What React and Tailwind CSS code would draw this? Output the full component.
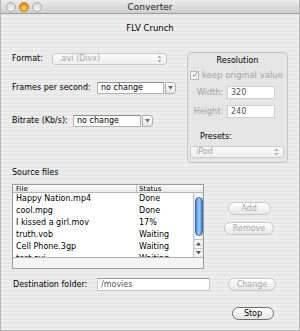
import React from 'react';

const Stepper = ({ color = '#9a9a9a' }) => (
  <svg width="5" height="8" viewBox="0 0 5 8">
    <path d="M2.5 0.5 L4.5 3 L0.5 3 Z" fill={color} />
    <path d="M2.5 7.5 L4.5 5 L0.5 5 Z" fill={color} />
  </svg>
);

const DownArrow = () => (
  <svg width="5" height="4" viewBox="0 0 5 4">
    <path d="M0 0 L5 0 L2.5 3.5 Z" fill="#6a6a6a" />
  </svg>
);

const PillButton = ({ label, disabled, className = '' }) => (
  <div
    className={`h-[13px] flex items-center justify-center rounded-full border bg-gradient-to-b from-white to-[#e6e6e6] ${
      disabled ? 'border-[#c6c6c6] text-[#a8a8a8]' : 'border-[#6f6f6f] text-black'
    } ${className}`}
  >
    {label}
  </div>
);

const Combo = ({ value, className = '' }) => (
  <div className={`flex h-[12px] ${className}`}>
    <div className="flex-1 bg-white border border-[#b4b4b4] border-t-[#8e8e8e] pl-[3px] flex items-center">
      {value}
    </div>
    <div className="w-[11px] ml-[1px] rounded-r-[3px] border border-[#b0b0b0] bg-gradient-to-b from-white to-[#e4e4e4] flex items-center justify-center">
      <DownArrow />
    </div>
  </div>
);

const files = [
  ['Happy Nation.mp4', 'Done'],
  ['cool.mpg', 'Done'],
  ['I kissed a girl.mov', '17%'],
  ['truth.vob', 'Waiting'],
  ['Cell Phone.3gp', 'Waiting'],
  ['test.avi', 'Waiting'],
];

export default function App() {
  return (
    <div className="w-[300px] h-[331px] overflow-hidden flex flex-col text-[8px] leading-[10px] text-black font-['DejaVu_Sans',sans-serif] bg-[repeating-linear-gradient(0deg,#ededed_0px,#ededed_2px,#e7e7e7_2px,#e7e7e7_4px)] border-x border-b border-[#b5b5b5]">
      {/* title bar */}
      <div className="h-[14px] shrink-0 flex items-center bg-gradient-to-b from-[#ececec] to-[#cdcdcd] border-b border-[#9c9c9c]">
        <div className="w-[45px] flex items-center gap-[3px] pl-[5px]">
          <div className="w-[10px] h-[10px] rounded-full border border-[#a9a9a9] bg-gradient-to-b from-[#d8d8d8] to-[#f4f4f4]" />
          <div className="w-[10px] h-[10px] rounded-full border border-[#c7791a] bg-[radial-gradient(circle_at_50%_70%,#ffd35a_0%,#f5a623_50%,#c96a10_100%)]" />
          <div className="w-[10px] h-[10px] rounded-full border border-[#a9a9a9] bg-gradient-to-b from-[#d8d8d8] to-[#f4f4f4]" />
        </div>
        <div className="flex-1 text-center text-[9px] text-[#222]">Converter</div>
        <div className="w-[45px]" />
      </div>

      <div className="mt-[9px] h-[10px] text-center text-[8.5px]">FLV Crunch</div>

      {/* top section */}
      <div className="mt-[19px] flex">
        <div className="w-[186px] pl-[11px] flex flex-col">
          <div className="mt-[1px] h-[12px] flex items-center">
            <span className="w-[40px]">Format:</span>
            <div className="w-[115px] h-[12px] rounded-[3px] border border-[#c8c8c8] bg-gradient-to-b from-[#fbfbfb] to-[#efefef] flex items-center pl-[6px] pr-[4px] text-[#a3a3a3]">
              <span className="flex-1">.avi (Divx)</span>
              <Stepper color="#a8a8a8" />
            </div>
          </div>
          <div className="mt-[17px] h-[12px] flex items-center">
            <span className="w-[85px]">Frames per second:</span>
            <Combo value="no change" className="w-[79px]" />
          </div>
          <div className="mt-[21px] h-[12px] flex items-center">
            <span className="w-[61px]">Bitrate (Kb/s):</span>
            <Combo value="no change" className="w-[80px]" />
          </div>
        </div>

        <div className="w-[101px] h-[111px] rounded-[4px] border border-[#c3c3c3] bg-[#e3e3e3]/70 flex flex-col px-[2px]">
          <div className="mt-[3px] h-[10px] text-center">Resolution</div>
          <div className="mt-[4px] h-[10px] flex items-center text-[#a2a2a2] text-[8.5px]">
            <div className="w-[9px] h-[9px] border border-[#b9b9b9] bg-[#f5f5f5] flex items-center justify-center">
              <svg width="9" height="9" viewBox="0 0 9 9" className="-mt-[2px] ml-[1px]">
                <path d="M1.5 4.5 L3.5 7.5 L8 0.5" stroke="#8a8a8a" strokeWidth="1.4" fill="none" />
              </svg>
            </div>
            <span className="ml-[3px]">keep original value</span>
          </div>
          <div className="mt-[6px] h-[13px] flex items-center text-[#a2a2a2]">
            <span className="w-[33px] text-right">Width:</span>
            <div className="ml-[4px] w-[48px] h-[13px] bg-white border border-[#cfcfcf] pl-[3px] flex items-center text-[#555]">320</div>
          </div>
          <div className="mt-[6px] h-[13px] flex items-center text-[#a2a2a2]">
            <span className="w-[33px] text-right">Height:</span>
            <div className="ml-[4px] w-[48px] h-[13px] bg-white border border-[#cfcfcf] pl-[3px] flex items-center text-[#555]">240</div>
          </div>
          <div className="mt-[14px] h-[10px] pl-[10px]">Presets:</div>
          <div className="mt-[4px] w-[94px] h-[12px] rounded-[3px] border border-[#cacaca] bg-gradient-to-b from-[#fbfbfb] to-[#eeeeee] flex items-center pl-[5px] pr-[4px] text-[#a3a3a3]">
            <span className="flex-1">iPod</span>
            <Stepper color="#a8a8a8" />
          </div>
        </div>
      </div>

      {/* source files */}
      <div className="mt-[5px] h-[10px] pl-[11px]">Source files</div>
      <div className="mt-[6px] flex">
        <div className="ml-[11px] w-[192px] h-[85px] border border-[#9a9a9a] bg-white flex flex-col">
          <div className="h-[8px] flex text-[7px] leading-[8px] bg-gradient-to-b from-white to-[#e9e9e9] border-b border-[#b6b6b6]">
            <div className="w-[124px] pl-[3px] border-r border-[#c2c2c2]">File</div>
            <div className="flex-1 pl-[2px]">Status</div>
          </div>
          <div className="h-[65px] flex border-b border-[#b0b0b0]">
            <div className="flex-1 overflow-hidden">
              {files.map(([name, status]) => (
                <div key={name} className="h-[12px] flex items-center">
                  <span className="w-[124px] pl-[3px]">{name}</span>
                  <span className="pl-[2px]">{status}</span>
                </div>
              ))}
            </div>
            <div className="w-[10px] bg-gradient-to-r from-[#e6e6e6] via-white to-[#e6e6e6] border-l border-[#c8c8c8] flex flex-col items-center">
              <div className="mt-[4px] w-[8px] h-[40px] rounded-full border border-[#3b6fb5] bg-gradient-to-r from-[#3d85dc] via-[#a9d2fa] to-[#3a7fd6]" />
              <div className="mt-[3px] w-full h-[9px] flex items-center justify-center border-t border-[#c8c8c8]">
                <svg width="5" height="4" viewBox="0 0 5 4"><path d="M2.5 0 L5 3.5 L0 3.5 Z" fill="#555" /></svg>
              </div>
              <div className="w-full h-[9px] flex items-center justify-center border-t border-[#c8c8c8]">
                <svg width="5" height="4" viewBox="0 0 5 4"><path d="M0 0 L5 0 L2.5 3.5 Z" fill="#555" /></svg>
              </div>
            </div>
          </div>
          <div className="flex-1 bg-[#f4f4f4]" />
        </div>
        <div className="w-[90px] flex flex-col items-center pt-[18px]">
          <PillButton label="Add" disabled className="w-[43px]" />
          <PillButton label="Remove" disabled className="w-[50px] mt-[7px]" />
        </div>
      </div>

      {/* destination */}
      <div className="mt-[9px] h-[13px] flex items-center">
        <span className="pl-[12px] w-[96px]">Destination folder:</span>
        <div className="w-[113px] h-[13px] bg-white border border-[#c6c6c6] border-t-[#9a9a9a] pl-[3px] flex items-center text-[#555]">/movies</div>
        <PillButton label="Change" disabled className="ml-[18px] w-[48px]" />
      </div>

      <div className="mt-[16px] flex justify-end pr-[25px]">
        <PillButton label="Stop" className="w-[42px]" />
      </div>
    </div>
  );
}
